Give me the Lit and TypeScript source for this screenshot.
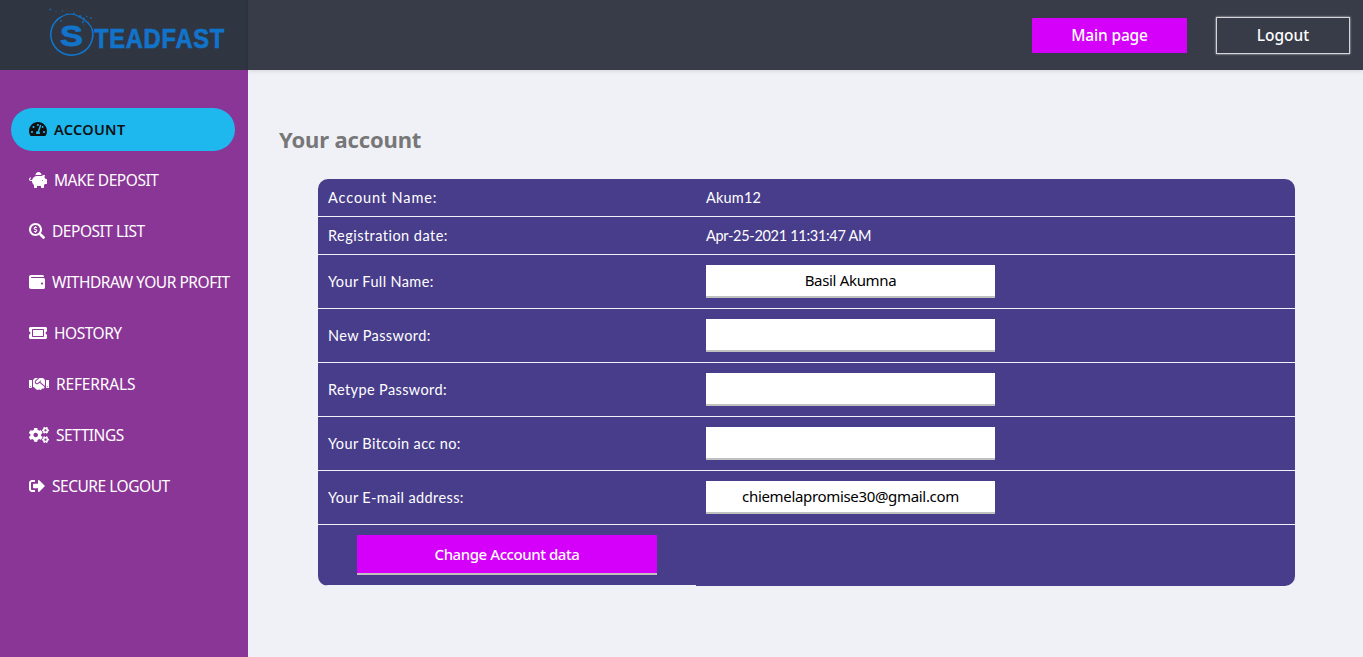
import { LitElement, html, css, svg } from "lit";
import { customElement } from "lit/decorators.js";

const smallGear =
  "M512.1 191l-8.2 14.3c-3 5.3-9.4 7.5-15.1 5.4-11.8-4.4-22.6-10.7-32.1-18.6-4.6-3.8-5.8-10.5-2.8-15.7l8.2-14.3c-6.9-8-12.3-17.3-15.9-27.4h-16.5c-6 0-11.2-4.3-12.2-10.3-2-12-2.1-24.6 0-37.1 1-6 6.2-10.4 12.2-10.4h16.5c3.6-10.1 9-19.4 15.9-27.4l-8.2-14.3c-3-5.2-1.9-11.9 2.8-15.7 9.5-7.9 20.4-14.2 32.1-18.6 5.7-2.1 12.1.1 15.1 5.4l8.2 14.3c10.5-1.9 21.2-1.9 31.7 0L552 6.3c3-5.3 9.4-7.5 15.1-5.4 11.8 4.4 22.6 10.7 32.1 18.6 4.6 3.8 5.8 10.5 2.8 15.7l-8.2 14.3c6.9 8 12.3 17.3 15.9 27.4h16.5c6 0 11.2 4.3 12.2 10.3 2 12 2.1 24.6 0 37.1-1 6-6.2 10.4-12.2 10.4h-16.5c-3.6 10.1-9 19.4-15.9 27.4l8.2 14.3c3 5.2 1.9 11.9-2.8 15.7-9.5 7.9-20.4 14.2-32.1 18.6-5.7 2.1-12.1-.1-15.1-5.4l-8.2-14.3c-10.4 1.9-21.2 1.9-31.7 0zm-10.5-58.8c38.5 29.6 82.4-14.3 52.8-52.8-38.5-29.7-82.4 14.3-52.8 52.8z";

const shapes = {
  gauge: svg`<path d="M288 32C128.94 32 0 160.94 0 320c0 52.8 14.25 102.26 39.06 144.8 5.61 9.62 16.3 15.2 27.44 15.2h443c11.14 0 21.83-5.58 27.44-15.2C561.75 422.26 576 372.8 576 320c0-159.06-128.94-288-288-288zm0 64c14.71 0 26.58 10.13 30.32 23.65-1.11 2.26-2.64 4.23-3.45 6.67l-9.22 27.67c-5.13 3.49-10.97 6.01-17.64 6.01-17.67 0-32-14.33-32-32S270.33 96 288 96zM96 384c-17.67 0-32-14.33-32-32s14.33-32 32-32 32 14.33 32 32-14.33 32-32 32zm48-160c-17.67 0-32-14.33-32-32s14.33-32 32-32 32 14.33 32 32-14.33 32-32 32zm246.77-72.41l-61.33 184C343.13 347.33 352 364.54 352 384c0 11.72-3.38 22.55-8.88 32H232.88c-5.5-9.45-8.88-20.28-8.88-32 0-33.94 26.5-61.43 59.9-63.59l61.34-184.01c4.17-12.56 17.73-19.45 30.36-15.17 12.57 4.19 19.35 17.79 15.17 30.36zm14.66 57.2l15.52-46.55c3.47-1.29 7.13-2.23 11.05-2.23 17.67 0 32 14.33 32 32s-14.33 32-32 32c-11.38-.01-20.89-6.28-26.57-15.22zM480 384c-17.67 0-32-14.33-32-32s14.33-32 32-32 32 14.33 32 32-14.33 32-32 32z"/>`,
  pig: svg`<path d="M560 224h-29.5c-8.8-20-21.6-37.7-37.4-52.5L512 96h-32c-29.4 0-55.4 13.5-73 34.3-7.6-1.1-15.1-2.3-23-2.3H256c-77.4 0-141.9 55-156.8 128H56c-14.8 0-26.5-13.5-23.5-28.8C34.7 215.8 45.4 208 57 208h1c3.3 0 6-2.7 6-6v-20c0-3.3-2.7-6-6-6-28.5 0-53.9 20.4-57.5 48.6C-3.9 258.8 22.7 288 56 288h40c0 52.2 25.4 98.1 64 127.3V496c0 8.8 7.2 16 16 16h64c8.8 0 16-7.2 16-16v-48h128v48c0 8.8 7.2 16 16 16h64c8.8 0 16-7.2 16-16v-80.7c11.8-8.9 22.3-19.4 31.3-31.3H560c8.8 0 16-7.2 16-16V240c0-8.8-7.2-16-16-16zm-128 64c-8.8 0-16-7.2-16-16s7.2-16 16-16 16 7.2 16 16-7.2 16-16 16zM256 96h128c5.4 0 10.7.4 15.9.8 0-.3.1-.5.1-.8 0-53-43-96-96-96s-96 43-96 96c0 2.1.5 4.1.6 6.2 15.2-3.9 31-6.2 47.4-6.2z"/>`,
  search: svg`<path d="M505.04 442.66l-99.71-99.69c-4.5-4.5-10.6-7-17-7h-16.3c27.6-35.3 44-79.69 44-127.99C416.03 93.09 322.92 0 208.02 0S0 93.09 0 207.98s93.11 207.98 208.02 207.98c48.3 0 92.71-16.4 128.01-44v16.3c0 6.4 2.5 12.5 7 17l99.71 99.69c9.4 9.4 24.6 9.4 33.9 0l28.3-28.3c9.4-9.4 9.4-24.59.1-33.99zm-297.02-90.7c-79.54 0-144-64.34-144-143.98 0-79.53 64.35-143.98 144-143.98 79.54 0 144 64.34 144 143.98 0 79.53-64.35 143.98-144 143.98zm27.11-152.54l-45.01-13.5c-5.16-1.55-8.77-6.78-8.77-12.73 0-7.27 5.3-13.19 11.8-13.19h28.1c4.56 0 8.96 1.29 12.82 3.72 3.24 2.03 7.36 1.91 10.13-.73l11.75-11.21c3.53-3.37 3.33-9.21-.57-12.14-9.1-6.83-20.08-10.77-31.37-11.35V112c0-4.42-3.58-8-8-8h-16c-4.42 0-8 3.58-8 8v16.12c-23.63.63-42.68 20.55-42.68 45.07 0 19.97 12.99 37.81 31.58 43.39l45.01 13.5c5.16 1.55 8.77 6.78 8.77 12.73 0 7.27-5.3 13.19-11.8 13.19h-28.1c-4.56 0-8.96-1.29-12.82-3.72-3.24-2.03-7.36-1.91-10.13.73l-11.75 11.21c-3.53 3.37-3.33 9.21.57 12.14 9.1 6.83 20.08 10.77 31.37 11.35V304c0 4.42 3.58 8 8 8h16c4.42 0 8-3.58 8-8v-16.12c23.63-.63 42.68-20.54 42.68-45.07 0-19.97-12.99-37.81-31.59-43.39z"/>`,
  wallet: svg`<path d="M461.2 128H80c-8.84 0-16-7.16-16-16s7.16-16 16-16h384c8.84 0 16-7.16 16-16 0-26.51-21.49-48-48-48H64C28.65 32 0 60.65 0 96v320c0 35.35 28.65 64 64 64h397.2c28.02 0 50.8-21.53 50.8-48V176c0-26.47-22.78-48-50.8-48zM416 336c-17.67 0-32-14.33-32-32s14.33-32 32-32 32 14.33 32 32-14.33 32-32 32z"/>`,
  ticket: svg`<path d="M128 160h320v192H128V160zm400 96c0 26.51 21.49 48 48 48v96c0 26.51-21.49 48-48 48H48c-26.51 0-48-21.49-48-48v-96c26.51 0 48-21.49 48-48s-21.49-48-48-48v-96c0-26.51 21.49-48 48-48h480c26.51 0 48 21.49 48 48v96c-26.51 0-48 21.49-48 48zm-48-104c0-13.255-10.745-24-24-24H120c-13.255 0-24 10.745-24 24v208c0 13.255 10.745 24 24 24h336c13.255 0 24-10.745 24-24V152z"/>`,
  handshake: svg`<path d="M434.7 64h-85.9c-8 0-15.7 3-21.6 8.4l-98.3 90c-.1.1-.2.3-.3.4-16.6 15.6-16.3 40.5-2.1 56 12.7 13.9 39.4 17.6 56.1 2.7.1-.1.3-.1.4-.2l79.9-73.2c6.5-5.9 16.7-5.5 22.6 1 6 6.5 5.5 16.6-1 22.6l-26.1 23.9L504 313.8c2.9 2.4 5.5 5 7.9 7.7V128l-54.6-54.6c-5.9-6-14.1-9.4-22.6-9.4zM544 128.2v223.9c0 17.7 14.3 32 32 32h64V128.2h-96zm48 223.9c-8.8 0-16-7.2-16-16s7.2-16 16-16 16 7.2 16 16-7.2 16-16 16zM0 384h64c17.7 0 32-14.3 32-32V128.2H0V384zm48-63.9c8.8 0 16 7.2 16 16s-7.2 16-16 16-16-7.2-16-16c0-8.9 7.2-16 16-16zm435.9 18.6L334.6 217.5l-30 27.5c-29.7 27.1-75.2 24.5-101.7-4.4-26.9-29.4-24.8-74.9 4.4-101.7L289.1 64h-83.8c-8.5 0-16.6 3.4-22.6 9.4L128 128v223.9h18.3l90.5 81.9c27.4 22.3 67.7 18.1 90-9.3l.2-.2 17.9 15.5c15.9 13 39.4 10.5 52.3-5.4l31.4-38.6 5.4 4.4c13.7 11.1 33.9 9.1 45-4.7l9.5-11.7c11.2-13.8 9.1-33.9-4.6-45.1z"/>`,
  cogs: svg`<path d=${smallGear}/><path transform="translate(0 299)" d=${smallGear}/><path d="M386.3 286.1l33.7 16.8c10.1 5.8 14.5 18.1 10.5 29.1-8.9 24.2-26.4 46.4-42.6 65.8-7.4 8.9-20.2 11.1-30.3 5.3l-29.1-16.8c-16 13.7-34.6 24.6-54.9 31.7v33.6c0 11.6-8.3 21.6-19.7 23.6-24.6 4.2-50.4 4.4-75.9 0-11.5-2-20-11.9-20-23.6V418c-20.3-7.2-38.9-18-54.9-31.7L74 403c-10 5.8-22.9 3.6-30.3-5.3-16.2-19.4-33.3-41.6-42.2-65.7-4-10.9.4-23.2 10.5-29.1l33.3-16.8c-3.9-20.9-3.9-42.4 0-63.4L12 205.8c-10.1-5.8-14.6-18.1-10.5-29 8.9-24.2 26-46.4 42.2-65.8 7.4-8.9 20.2-11.1 30.3-5.3l29.1 16.8c16-13.7 34.6-24.6 54.9-31.7V57.1c0-11.5 8.2-21.5 19.6-23.5 24.6-4.2 50.5-4.4 76-.1 11.5 2 20 11.9 20 23.6v33.6c20.3 7.2 38.9 18 54.9 31.7l29.1-16.8c10-5.8 22.9-3.6 30.3 5.3 16.2 19.4 33.2 41.6 42.1 65.8 4 10.9.1 23.2-10 29.1l-33.7 16.8c3.9 21 3.9 42.5 0 63.5zm-117.6 21.1c59.2-77-28.7-164.9-105.7-105.7-59.2 77 28.7 164.9 105.7 105.7z"/>`,
  exit: svg`<path d="M497 273L329 441c-15 15-41 4.5-41-17v-96H152c-13.3 0-24-10.7-24-24v-96c0-13.3 10.7-24 24-24h136V88c0-21.4 25.9-32 41-17l168 168c9.3 9.4 9.3 24.6 0 34zM192 436v-40c0-6.6-5.4-12-12-12H96c-17.7 0-32-14.3-32-32V160c0-17.7 14.3-32 32-32h84c6.6 0 12-5.4 12-12V76c0-6.6-5.4-12-12-12H96c-53 0-96 43-96 96v192c0 53 43 96 96 96h84c6.6 0 12-5.4 12-12z"/>`,
};

const menu = [
  { label: "ACCOUNT", shape: shapes.gauge, units: 576, tone: "active" },
  { label: "MAKE DEPOSIT", shape: shapes.pig, units: 576, tone: "" },
  { label: "DEPOSIT LIST", shape: shapes.search, units: 512, tone: "" },
  { label: "WITHDRAW YOUR PROFIT", shape: shapes.wallet, units: 512, tone: "" },
  { label: "HOSTORY", shape: shapes.ticket, units: 576, tone: "" },
  { label: "REFERRALS", shape: shapes.handshake, units: 640, tone: "loose" },
  { label: "SETTINGS", shape: shapes.cogs, units: 640, tone: "" },
  { label: "SECURE LOGOUT", shape: shapes.exit, units: 512, tone: "" },
];

const fields = [
  { label: "Your Full Name:", value: "Basil Akumna", type: "text" },
  { label: "New Password:", value: "", type: "password" },
  { label: "Retype Password:", value: "", type: "password" },
  { label: "Your Bitcoin acc no:", value: "", type: "text" },
  { label: "Your E-mail address:", value: "chiemelapromise30@gmail.com", type: "text" },
];

@customElement("side-menu")
class SideMenu extends LitElement {
  static styles = css`
    :host { display: block; background: #8a3696; padding: 38px 13px 0 11px; box-sizing: border-box; }
    .list { display: flex; flex-direction: column; gap: 8px; }
    .item {
      display: flex; align-items: center; gap: 7px; height: 43px; padding: 0 0 1px 18px;
      box-sizing: border-box; border-radius: 22px; color: #fff; white-space: nowrap;
      font: 450 15.5px "Noto Sans", sans-serif; letter-spacing: -0.47px; text-decoration: none;
    }
    .active { background: #1eb7ee; color: #111; font-weight: 600; font-size: 14.5px; letter-spacing: 0.3px; }
    .loose { letter-spacing: -0.15px; }
    .icon { height: 16px; flex: none; fill: currentColor; display: block; }
    .label { padding-bottom: 1px; }
  `;
  render() {
    return html`<nav class="list">
      ${menu.map(
        (m) => html`<a class="item ${m.tone}">
          <svg class="icon" width=${m.units / 32} viewBox="0 0 ${m.units} 512">${m.shape}</svg>
          <span class="label">${m.label}</span>
        </a>`
      )}
    </nav>`;
  }
}

@customElement("account-form")
class AccountForm extends LitElement {
  static styles = css`
    :host { display: block; }
    .card {
      background: #483d8b; border-radius: 10px; overflow: hidden; color: #fff;
      font: 14.5px Lato, sans-serif; letter-spacing: 0.38px;
    }
    .row {
      display: grid; grid-template-columns: 378px 1fr; align-items: center;
      height: 38px; box-sizing: border-box; padding-left: 10px; border-bottom: 1px solid #f0f1f7;
    }
    .name { letter-spacing: 0.9px; }
    .reg { letter-spacing: 0.47px; }
    .user { letter-spacing: 0.2px; }
    .date { letter-spacing: -0.3px; }
    .tall { height: 54px; }
    .input {
      width: 289px; height: 33px; box-sizing: border-box; border: 0; border-bottom: 2px solid #c0c0c0;
      border-radius: 0; background: #fff; color: #000; text-align: center; padding: 0 0 2px; outline: 0;
      font: 15px "Noto Sans", sans-serif; letter-spacing: -0.33px;
    }
    .foot { height: 61px; display: grid; grid-template-columns: 378px 1fr; }
    .cell { border-bottom: 1px solid #f0f1f7; padding: 10px 0 0 39px; }
    .save {
      width: 300px; height: 40px; border: 0; border-bottom: 2px solid #c0c0c0; background: #d500f9;
      color: #fff; padding: 0; font: 500 15px "Noto Sans", sans-serif; letter-spacing: -0.43px;
    }
  `;
  render() {
    return html`<div class="card">
      <div class="row"><span class="name">Account Name:</span><span class="user">Akum12</span></div>
      <div class="row">
        <span class="reg">Registration date:</span><span class="date">Apr-25-2021 11:31:47 AM</span>
      </div>
      ${fields.map(
        (f) => html`<div class="row tall">
          <span>${f.label}</span><input class="input" type=${f.type} .value=${f.value} />
        </div>`
      )}
      <div class="foot"><div class="cell"><button class="save">Change Account data</button></div></div>
    </div>`;
  }
}

@customElement("app-root")
class AppRoot extends LitElement {
  static styles = css`
    :host {
      display: grid; grid-template: 70px 1fr / 248px 1fr; width: 100%; height: 100vh;
      overflow: hidden; background: #f0f1f7; font-family: "Noto Sans", sans-serif;
    }
    .brand { background: #303641; }
    .logo { display: block; }
    .wordmark {
      font: bold 27px "Liberation Sans", sans-serif; fill: #1173ca; stroke: #1173ca;
      stroke-width: 0.7; letter-spacing: 0.8px;
    }
    .initial { font: bold 30px "Liberation Sans", sans-serif; fill: #1173ca; stroke: #1173ca; stroke-width: 0.8; }
    .bar {
      display: flex; justify-content: flex-end; align-items: center; gap: 29px; padding-right: 13px;
      background: #373c48; box-shadow: 0 1px 4px rgba(0, 0, 0, 0.12); z-index: 1;
    }
    .btn { box-sizing: border-box; border: 0; padding: 0; color: #fff; font: 500 15.5px "Noto Sans", sans-serif; }
    .main { width: 155px; height: 35px; background: #d500f9; letter-spacing: -0.15px; }
    .out {
      width: 134px; height: 37px; background: transparent; border: 1px solid #d5d6da;
      box-shadow: 0 0 2px #d5d6da;
    }
    .content { padding: 54px 68px 0 31px; }
    .title { margin: 0 0 25px; font: bold 22px/30px "Noto Sans", sans-serif; color: #777; letter-spacing: -0.15px; }
    .form { margin-left: 39px; }
  `;
  render() {
    return html`
      <div class="brand">
        <svg class="logo" width="248" height="70" viewBox="0 0 248 70">
          <path d="M61 17A21 20.5 0 1 0 92 29" fill="none" stroke="#1173ca" stroke-width="1.6" />
          <path d="M61 17Q70 11 80 17T92 29" fill="none" stroke="#1173ca" stroke-width="1.1" />
          <g fill="#1173ca" opacity=".75">
            <circle cx="50.3" cy="9.5" r="1" /><circle cx="56" cy="11.5" r=".6" />
            <circle cx="62.5" cy="11" r=".7" /><circle cx="67" cy="13.5" r=".7" />
            <circle cx="74" cy="13.5" r=".9" /><circle cx="61" cy="21" r="1" />
            <circle cx="80" cy="16.5" r="1.4" /><circle cx="84" cy="18.5" r="1.1" />
            <circle cx="87" cy="16.5" r=".8" /><circle cx="91" cy="18" r=".9" />
            <circle cx="83" cy="22" r="1.2" /><circle cx="88" cy="22.5" r=".9" />
            <circle cx="84" cy="25" r=".6" /><circle cx="91" cy="26" r=".6" />
          </g>
          <text class="initial" x="60" y="46" textLength="23" lengthAdjust="spacingAndGlyphs">S</text>
          <text class="wordmark" x="94" y="48.2" textLength="131" lengthAdjust="spacingAndGlyphs">TEADFAST</text>
        </svg>
      </div>
      <header class="bar">
        <button class="btn main">Main page</button>
        <button class="btn out">Logout</button>
      </header>
      <side-menu></side-menu>
      <main class="content">
        <h3 class="title">Your account</h3>
        <account-form class="form"></account-form>
      </main>
    `;
  }
}
